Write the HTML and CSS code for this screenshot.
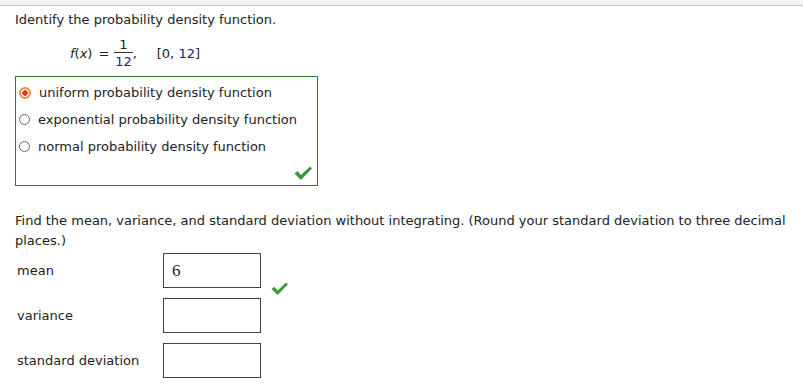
FILE: index.html
```html
<!DOCTYPE html>
<html>
<head>
<meta charset="utf-8">
<link rel="stylesheet" href="styles.css">
</head>
<body>
<div class="topbar"></div>
<div class="content">
  <p class="q">Identify the probability density function.</p>
  <div class="formula">
    <span class="fx"><i>f</i>(<i>x</i>)</span>
    <span class="eq">=</span>
    <span class="frac"><span class="num">1</span><span class="den">12</span></span><span class="comma">,</span>
    <span class="interval">[0, <span class="blue">12</span>]</span>
  </div>
  <div class="choices">
    <div class="opt"><span class="radio on"></span><span>uniform probability density function</span></div>
    <div class="opt"><span class="radio"></span><span>exponential probability density function</span></div>
    <div class="opt"><span class="radio"></span><span>normal probability density function</span></div>
    <svg class="check box-check" viewBox="0 0 20 16" width="20" height="16"><path d="M1.5 8.5 L4.5 6 L8 10 L17 1.5 L19 3.5 L8 15 Z" fill="#3a9a3a"/></svg>
  </div>
  <p class="q2">Find the mean, variance, and standard deviation without integrating. (Round your standard deviation to three decimal places.)</p>
  <div class="rows">
    <div class="row"><span class="label">mean</span><span class="input">6</span><svg class="check" viewBox="0 0 20 16" width="19" height="15"><path d="M1.5 8.5 L4.5 6 L8 10 L17 1.5 L19 3.5 L8 15 Z" fill="#3a9a3a"/></svg></div>
    <div class="row"><span class="label">variance</span><span class="input"></span></div>
    <div class="row"><span class="label">standard deviation</span><span class="input"></span></div>
  </div>
</div>
</body>
</html>
```
FILE: styles.css
```css
html, body { margin: 0; padding: 0; background: #fff; }
body { font-family: "DejaVu Sans", Verdana, sans-serif; font-size: 13px; color: #222; }
.topbar { height: 5px; background: #f3f3f3; border-bottom: 1px solid #c8c8c8; }
.content { padding: 0 15px; }
.q { margin: 5px 0 0; line-height: 18px; }
.formula { display: flex; align-items: center; margin: 8px 0 0 55px; height: 32px; }
.fx i { font-style: italic; }
.eq { margin: 0 5px 0 6px; }
.frac { display: inline-flex; flex-direction: column; align-items: center; font-size: 13px; line-height: 15px; }
.num { border-bottom: 1px solid #333; padding: 0 5px 0; }
.den { color: #1a1a8c; padding-top: 1px; }
.comma { margin-right: 20px; }
.blue { color: #1a1a8c; }
.choices { position: relative; margin-top: 7px; width: 301px; height: 106px; border: 1px solid #2e7a3c; padding-top: 2px; }
.opt { display: flex; align-items: center; height: 27px; padding-left: 3px; }
.radio { width: 11px; height: 11px; border: 1px solid #666; border-radius: 50%; margin-right: 8px; box-sizing: border-box; background: #fff; flex: none; }
.radio.on { border: 2px solid #f08a3c; background: radial-gradient(circle, #e8332a 0 2.5px, #fff 3px); width: 12px; height: 12px; }
.box-check { position: absolute; right: 4px; bottom: 4px; }
.q2 { margin: 25px 0 0; line-height: 20px; }
.rows { margin-top: 2px; }
.row { display: flex; align-items: center; height: 35px; margin-bottom: 10px; }
.label { width: 146px; padding-left: 2px; }
.input { display: flex; align-items: center; padding-left: 8px; box-sizing: border-box; width: 98px; height: 35px; border: 1px solid #444; font-family: "Liberation Serif", serif; font-size: 17px; color: #222; }
.row .check { margin: 28px 0 0 9px; align-self: flex-start; }
```
